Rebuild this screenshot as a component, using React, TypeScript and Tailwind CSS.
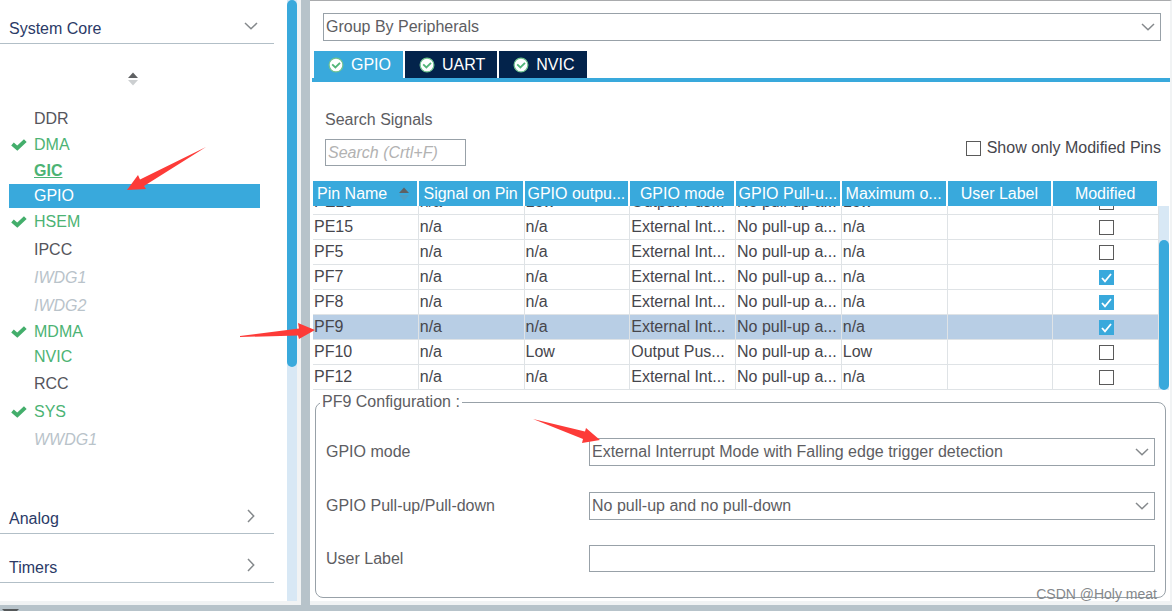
import React, { useLayoutEffect, useRef, useState } from "react";

type ItemStatus = "plain" | "enabled" | "configured" | "partial" | "disabled";

interface CoreItem {
  name: string;
  status: ItemStatus;
  height: string;
}

interface Pin {
  name: string;
  output: string;
  mode: string;
  speed: string;
  modified: boolean;
}

const coreItems: CoreItem[] = [
  { name: "DDR", status: "plain", height: "h-[26px]" },
  { name: "DMA", status: "configured", height: "h-[26px]" },
  { name: "GIC", status: "partial", height: "h-[26px]" },
  { name: "GPIO", status: "enabled", height: "h-6" },
  { name: "HSEM", status: "configured", height: "h-7" },
  { name: "IPCC", status: "plain", height: "h-7" },
  { name: "IWDG1", status: "disabled", height: "h-7" },
  { name: "IWDG2", status: "disabled", height: "h-7" },
  { name: "MDMA", status: "configured", height: "h-6" },
  { name: "NVIC", status: "enabled", height: "h-[26px]" },
  { name: "RCC", status: "plain", height: "h-7" },
  { name: "SYS", status: "configured", height: "h-7" },
  { name: "WWDG1", status: "disabled", height: "h-7" },
];

const statusClass: Record<ItemStatus, string> = {
  plain: "text-[#55555c]",
  enabled: "text-[#4cb374]",
  configured: "text-[#4cb374]",
  partial: "text-[#4cb374] font-bold underline",
  disabled: "text-[#b9c3ca] italic",
};

const external = "External Interrupt Mode with Falling edge trigger detection";
const noPull = "No pull-up and no pull-down";

// short forms that fit a table column
const externalShort = "External Int...";
const outputShort = "Output Pus...";
const noPullShort = "No pull-up a...";

const pins: Pin[] = [
  { name: "PE10", output: "Low", mode: outputShort, speed: "Low", modified: false },
  { name: "PE15", output: "n/a", mode: externalShort, speed: "n/a", modified: false },
  { name: "PF5", output: "n/a", mode: externalShort, speed: "n/a", modified: false },
  { name: "PF7", output: "n/a", mode: externalShort, speed: "n/a", modified: true },
  { name: "PF8", output: "n/a", mode: externalShort, speed: "n/a", modified: true },
  { name: "PF9", output: "n/a", mode: externalShort, speed: "n/a", modified: true },
  { name: "PF10", output: "Low", mode: outputShort, speed: "Low", modified: false },
  { name: "PF12", output: "n/a", mode: externalShort, speed: "n/a", modified: false },
];

const columns = [
  "Signal on Pin",
  "GPIO outpu...",
  "GPIO mode",
  "GPIO Pull-u...",
  "Maximum o...",
  "User Label",
  "Modified",
];

const Chevron = ({ className = "" }: { className?: string }) => (
  <svg
    className={className}
    width="14"
    height="8"
    viewBox="0 0 14 8"
    fill="none"
    stroke="#85898c"
    strokeWidth="1.5"
  >
    <path d="M1 1l6 5.7L13 1" />
  </svg>
);

const SortArrows = ({ down }: { down: string }) => (
  <svg width="10" height="14" viewBox="0 0 10 14">
    <path d="M5 0.5L10 6H0z" fill="#5f6163" />
    <path d="M5 13.5L0 8h10z" fill={down} />
  </svg>
);

const Tick = () => (
  <svg width="16" height="12" viewBox="0 0 16 12" fill="none">
    <path d="M1.500 5L6.300 9.200 14.300 1.600" stroke="#43ae6b" strokeWidth="3.900" />
  </svg>
);

const TabBadge = () => (
  <svg width="16" height="16" viewBox="0 0 16 16" fill="none">
    <circle cx="8" cy="8" r="6.9" fill="#fff" stroke="#6fc28e" strokeWidth="1.2" />
    <path d="M4.2 7.4L7.400 10.400 12 5.900" stroke="#52b678" strokeWidth="1.9" />
  </svg>
);

// square tick box, the mark is drawn over the native input
const CheckBox = ({
  id,
  label,
  initial = false,
}: {
  id: string;
  label?: string;
  initial?: boolean;
}) => {
  const [checked, setChecked] = useState(initial);
  return (
    <span className="relative inline-block h-[15px] w-[15px] shrink-0">
      <input
        id={id}
        type="checkbox"
        aria-label={label}
        checked={checked}
        onChange={(e) => setChecked(e.target.checked)}
        className="block h-full w-full appearance-none border border-[#5a5a5a] bg-white checked:border-[#39a9dc] checked:bg-[#39a9dc]"
      />
      {checked ? (
        <svg
          className="pointer-events-none absolute inset-0"
          width="15"
          height="15"
          viewBox="0 0 15 15"
          fill="none"
          stroke="#fff"
          strokeWidth="1.8"
        >
          <path d="M3 8l3 3.3L12 4" />
        </svg>
      ) : null}
    </span>
  );
};

const SelectBox = ({
  id,
  label,
  options,
}: {
  id: string;
  label?: string;
  options: string[];
}) => (
  <div className="relative min-w-0 flex-1">
    <select
      id={id}
      aria-label={label}
      className="block h-7 w-full appearance-none border border-[#98a1a8] bg-white pr-8 pl-0.5 text-[#5d5d62]"
    >
      {options.map((option) => (
        <option key={option}>{option}</option>
      ))}
    </select>
    <Chevron className="pointer-events-none absolute top-[10px] right-[6px]" />
  </div>
);

const SectionHeader = ({ title, open = false }: { title: string; open?: boolean }) => (
  <button
    aria-expanded={open}
    className="flex h-[26px] w-[274px] items-start border-b border-[#b2bfc7] pr-4 pl-[9px] text-left text-[#2b3a67]"
  >
    <span className="flex-1 leading-[22px]">{title}</span>
    <Chevron className={open ? "mt-1" : "mt-1 -rotate-90"} />
  </button>
);

const Sidebar = () => {
  const [selected, setSelected] = useState("GPIO");
  return (
    <aside className="flex w-[301px] shrink-0 border-r-4 border-b-4 border-[#f1f3f4]">
      <div className="w-[287px] pt-[18px]">
        <SectionHeader title="System Core" open />
        <button aria-label="Sort" className="mt-7 ml-[128px] block">
          <SortArrows down="#cccfd1" />
        </button>
        <ul className="mt-5 ml-[9px] w-[251px]">
          {coreItems.map((item) => (
            <li key={item.name}>
              <button
                onClick={() => setSelected(item.name)}
                className={`flex w-full items-center text-left ${item.height} ${
                  item.name === selected
                    ? "bg-[#39a9dc] text-white"
                    : statusClass[item.status]
                }`}
              >
                <span className="w-[25px] pl-0.5">
                  {item.status === "configured" ? <Tick /> : null}
                </span>
                {item.name}
              </button>
            </li>
          ))}
        </ul>
        <div className="mt-[54px] mb-[18px] flex flex-col gap-[23px]">
          <SectionHeader title="Analog" />
          <SectionHeader title="Timers" />
        </div>
      </div>
      <div className="w-[10px] bg-[#d8e8f5]">
        <div className="h-[61%] rounded-full bg-[#39a9dc]"></div>
      </div>
    </aside>
  );
};

const Tabs = () => {
  const [tab, setTab] = useState("GPIO");
  return (
    <div
      role="tablist"
      className="mt-[10px] ml-0.5 flex gap-0.5 border-b-4 border-[#39a9dc] pl-0.5"
    >
      {["GPIO", "UART", "NVIC"].map((name) => (
        <button
          key={name}
          role="tab"
          aria-selected={tab === name}
          onClick={() => setTab(name)}
          className={`flex h-[27px] items-center gap-[7px] pr-3 pl-[14px] text-white ${
            tab === name ? "bg-[#39a9dc]" : "bg-[#03234b]"
          }`}
        >
          <TabBadge />
          {name}
        </button>
      ))}
    </div>
  );
};

const PinTable = () => {
  const scroller = useRef<HTMLDivElement>(null);
  const [selected, setSelected] = useState("PF9");

  // keep the last pins in view
  useLayoutEffect(() => {
    if (scroller.current) {
      scroller.current.scrollTop = scroller.current.scrollHeight;
    }
  }, []);

  const cell = "h-[25px] truncate border-r border-b border-[#dfe3e6] pl-px";
  const head =
    "sticky top-0 z-10 h-[25px] truncate border-r-2 border-white bg-[#39a9dc] text-center font-normal";

  return (
    <div className="mt-[15px] mr-px ml-[3px] flex h-[209px]">
      <div ref={scroller} className="min-w-0 flex-1 overflow-hidden">
        <table className="w-full table-fixed border-separate border-spacing-0 leading-5 text-[#46464c]">
          <thead className="text-white">
            <tr>
              <th className={head}>
                <div className="flex items-center justify-between pr-2 pl-1">
                  Pin Name
                  <SortArrows down="#4f9fc4" />
                </div>
              </th>
              {columns.map((column) => (
                <th key={column} className={head}>
                  {column}
                </th>
              ))}
            </tr>
          </thead>
          <tbody>
            {pins.map((pin) => (
              <tr
                key={pin.name}
                onClick={() => setSelected(pin.name)}
                className={pin.name === selected ? "bg-[#b8cee5]" : "bg-white"}
              >
                <td className={cell}>{pin.name}</td>
                <td className={cell}>n/a</td>
                <td className={cell}>{pin.output}</td>
                <td className={cell}>{pin.mode}</td>
                <td className={cell}>{noPullShort}</td>
                <td className={cell}>{pin.speed}</td>
                <td className={cell}></td>
                <td className={cell}>
                  <div className="flex justify-center">
                    <CheckBox
                      id={`modified-${pin.name}`}
                      label={`${pin.name} modified`}
                      initial={pin.modified}
                    />
                  </div>
                </td>
              </tr>
            ))}
          </tbody>
        </table>
      </div>
      <div className="mt-[25px] flex w-[10px] flex-col justify-end bg-[#d8e8f5]">
        <div className="h-[150px] rounded-full bg-[#39a9dc]"></div>
      </div>
    </div>
  );
};

const PinConfiguration = () => (
  <fieldset className="mt-0.5 mr-1 ml-[5px] rounded-lg border border-[#98a1a8] pr-[10px] pb-[25px] pl-[10px] text-[#5d5d62]">
    <legend className="-ml-1.5 px-0.5 leading-5">PF9 Configuration :</legend>
    <div className="mt-[26px] flex items-center">
      <label htmlFor="gpio-mode" className="w-[263px]">
        GPIO mode
      </label>
      <SelectBox
        id="gpio-mode"
        options={[external, "External Interrupt Mode with Rising edge trigger detection"]}
      />
    </div>
    <div className="mt-[26px] flex items-center">
      <label htmlFor="gpio-pull" className="w-[263px]">
        GPIO Pull-up/Pull-down
      </label>
      <SelectBox id="gpio-pull" options={[noPull, "Pull-up", "Pull-down"]} />
    </div>
    <div className="mt-[25px] flex items-center">
      <label htmlFor="user-label" className="w-[263px]">
        User Label
      </label>
      <input
        id="user-label"
        type="text"
        className="h-[27px] min-w-0 flex-1 border border-[#98a1a8] px-0.5"
      />
    </div>
  </fieldset>
);

// red marker arrows and the author mark lying over the window
const Annotations = () => (
  <div className="pointer-events-none absolute inset-0">
    <svg className="absolute top-0 left-0" width="620" height="460" fill="#fd3b38">
      <path d="M206 147L140 179.500 138 175 127 190 146 189 144 186z" />
      <path d="M240 336L299 328.500 298 323 315 330 299 339 298 335.500 240 337z" />
      <path d="M533 419L585 431.500 586 428 600 440 582 443 583 439z" />
    </svg>
    <span className="absolute right-[15px] bottom-[7px] text-sm text-[#85888b]">
      CSDN @Holy meat
    </span>
  </div>
);

export default function App() {
  return (
    <div className="relative bg-[#b7c3ca] pb-1.5 font-['Liberation_Sans',Arial,sans-serif] text-base">
      <div className="flex gap-[9px]">
        <div className="flex bg-white">
          <Sidebar />
        </div>
        <main className="min-w-0 flex-1 border-t border-r-2 border-b-4 border-t-[#a9abad] border-r-[#f1f3f4] border-b-[#f1f3f4] bg-white pb-[3px]">
          <div className="mt-3 mr-[9px] ml-[13px] flex">
            <SelectBox
              id="grouping"
              label="Grouping"
              options={["Group By Peripherals", "Group By IPs"]}
            />
          </div>
          <Tabs />
          <div className="mt-[27px] flex items-end justify-between pr-[9px] pl-[15px]">
            <div>
              <label htmlFor="search" className="block leading-[22px] text-[#5d5d62]">
                Search Signals
              </label>
              <input
                id="search"
                type="search"
                placeholder="Search (Crtl+F)"
                className="mt-2 block h-[27px] w-[141px] border border-[#98a1a8] px-0.5 italic placeholder:text-[#b2b2b2]"
              />
            </div>
            <label
              htmlFor="only-modified"
              className="mb-1.5 flex items-center gap-1.5 text-[#46464c]"
            >
              <CheckBox id="only-modified" />
              Show only Modified Pins
            </label>
          </div>
          <PinTable />
          <PinConfiguration />
        </main>
      </div>
      <svg className="absolute bottom-0 left-0.5" width="17" height="2">
        <path d="M0 0h17l-2 2H2z" fill="#55585a" />
      </svg>
      <Annotations />
    </div>
  );
}
